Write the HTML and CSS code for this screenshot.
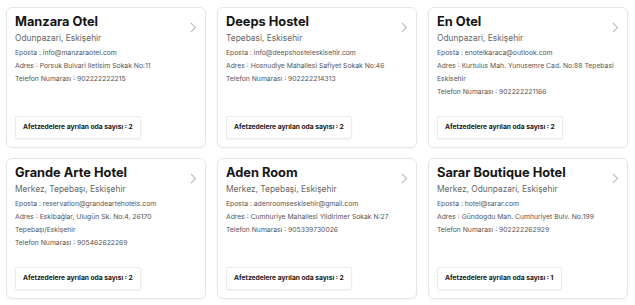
FILE: index.html
```html
<!DOCTYPE html>
<html lang="tr">

<head>
    <meta charset="UTF-8">
    <meta name="viewport" content="width=device-width, initial-scale=1.0">
    <title>Oteller</title>
    <link rel="stylesheet" href="styles.css">
</head>

<body>
    <div class="hotel-list">
        <div class="hotel-card">
            <div class="hotel-head">
                <h3>Manzara Otel</h3>
                <span class="arrow"><svg width="7" height="11" viewBox="0 0 7 11"><path d="M1 1l4.5 4.5L1 10" fill="none" stroke="#bdbdbd" stroke-width="1.1"/></svg></span>
            </div>
            <p class="location">Odunpazari, Eskişehir</p>
            <p class="info">Eposta : info@manzaraotel.com</p>
            <p class="info">Adres : Porsuk Bulvari Iletisim Sokak No:11</p>
            <p class="info">Telefon Numarası : 902222222215</p>
            <div class="rooms">Afetzedelere ayrılan oda sayısı : 2</div>
        </div>
        <div class="hotel-card">
            <div class="hotel-head">
                <h3>Deeps Hostel</h3>
                <span class="arrow"><svg width="7" height="11" viewBox="0 0 7 11"><path d="M1 1l4.5 4.5L1 10" fill="none" stroke="#bdbdbd" stroke-width="1.1"/></svg></span>
            </div>
            <p class="location">Tepebasi, Eskisehir</p>
            <p class="info">Eposta : info@deepshosteleskisehir.com</p>
            <p class="info">Adres : Hosnudiye Mahallesi Safiyet Sokak No:46</p>
            <p class="info">Telefon Numarası : 902222214313</p>
            <div class="rooms">Afetzedelere ayrılan oda sayısı : 2</div>
        </div>
        <div class="hotel-card">
            <div class="hotel-head">
                <h3>En Otel</h3>
                <span class="arrow"><svg width="7" height="11" viewBox="0 0 7 11"><path d="M1 1l4.5 4.5L1 10" fill="none" stroke="#bdbdbd" stroke-width="1.1"/></svg></span>
            </div>
            <p class="location">Odunpazari, Eskişehir</p>
            <p class="info">Eposta : enotelkaraca@outlook.com</p>
            <p class="info">Adres : Kurtulus Mah. Yunusemre Cad. No:88 Tepebasi Eskisehir</p>
            <p class="info">Telefon Numarası : 902222221166</p>
            <div class="rooms">Afetzedelere ayrılan oda sayısı : 2</div>
        </div>
        <div class="hotel-card">
            <div class="hotel-head">
                <h3>Grande Arte Hotel</h3>
                <span class="arrow"><svg width="7" height="11" viewBox="0 0 7 11"><path d="M1 1l4.5 4.5L1 10" fill="none" stroke="#bdbdbd" stroke-width="1.1"/></svg></span>
            </div>
            <p class="location">Merkez, Tepebaşı, Eskişehir</p>
            <p class="info">Eposta : reservation@grandeartehotels.com</p>
            <p class="info">Adres : Eskibağlar, Ulugün Sk. No:4, 26170 Tepebaşı/Eskişehir</p>
            <p class="info">Telefon Numarası : 905462622269</p>
            <div class="rooms">Afetzedelere ayrılan oda sayısı : 2</div>
        </div>
        <div class="hotel-card">
            <div class="hotel-head">
                <h3>Aden Room</h3>
                <span class="arrow"><svg width="7" height="11" viewBox="0 0 7 11"><path d="M1 1l4.5 4.5L1 10" fill="none" stroke="#bdbdbd" stroke-width="1.1"/></svg></span>
            </div>
            <p class="location">Merkez, Tepebaşi, Eskişehir</p>
            <p class="info">Eposta : adenroomseskisehir@gmail.com</p>
            <p class="info">Adres : Cumhuriye Mahallesi Yildirimer Sokak N:27</p>
            <p class="info">Telefon Numarası : 905339730026</p>
            <div class="rooms">Afetzedelere ayrılan oda sayısı : 2</div>
        </div>
        <div class="hotel-card">
            <div class="hotel-head">
                <h3>Sarar Boutique Hotel</h3>
                <span class="arrow"><svg width="7" height="11" viewBox="0 0 7 11"><path d="M1 1l4.5 4.5L1 10" fill="none" stroke="#bdbdbd" stroke-width="1.1"/></svg></span>
            </div>
            <p class="location">Merkez, Odunpazari, Eskişehir</p>
            <p class="info">Eposta : hotel@sarar.com</p>
            <p class="info">Adres : Gündogdu Mah. Cumhuriyet Bulv. No:199</p>
            <p class="info">Telefon Numarası : 902222262929</p>
            <div class="rooms">Afetzedelere ayrılan oda sayısı : 1</div>
        </div>
    </div>
</body>

</html>
```

FILE: styles.css
```css
* {
    box-sizing: border-box;
}

body {
    margin: 0;
    background: #fff;
    font-family: Inter, "Noto Sans", sans-serif;
    color: #111;
}

.hotel-list {
    display: grid;
    grid-template-columns: repeat(3, 200px);
    grid-auto-rows: 141px;
    column-gap: 11px;
    row-gap: 10px;
    padding: 7px 6px;
}

.hotel-card {
    display: flex;
    flex-direction: column;
    border: 1px solid #e6e6e6;
    border-radius: 6px;
    padding: 7px 8px 8px 8px;
    box-shadow: 0 1px 2px rgba(0, 0, 0, 0.04);
}

.hotel-head {
    display: flex;
    justify-content: space-between;
    align-items: flex-start;
}

.hotel-head h3 {
    margin: 0;
    font-size: 12.8px;
    line-height: 14px;
    font-weight: 700;
    color: #151515;
}

.arrow {
    margin-top: 7px;
    display: flex;
}

.location {
    margin: 0 0 2px;
    font-size: 8.4px;
    line-height: 11px;
    color: #666;
}

.info {
    margin: 0;
    font-size: 6.8px;
    line-height: 13px;
    color: #555;
}

.rooms {
    margin-top: auto;
    align-self: flex-start;
    height: 23px;
    line-height: 21px;
    padding: 0 7px;
    border: 1px solid #ebebeb;
    border-radius: 2px;
    box-shadow: 0 1px 2px rgba(0, 0, 0, 0.05);
    font-size: 6.7px;
    font-weight: 700;
    color: #151515;
}
```
